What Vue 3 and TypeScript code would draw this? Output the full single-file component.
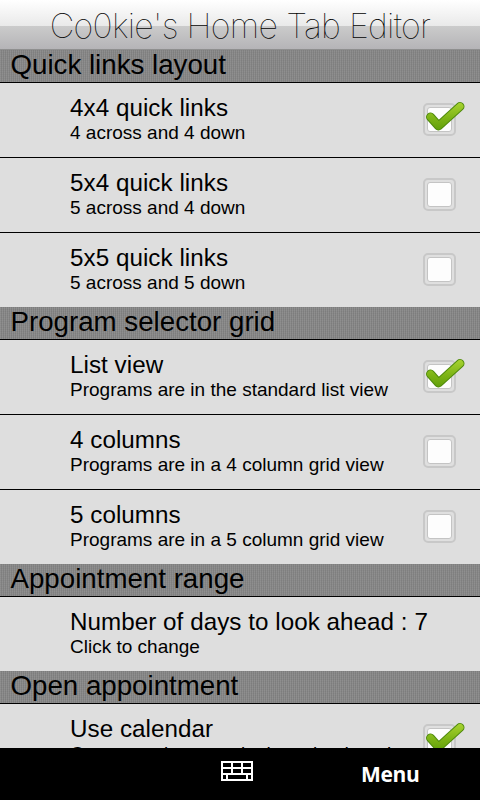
<script setup lang="ts">
interface Row {
  title: string;
  sub: string;
  check?: boolean;
  noBox?: boolean;
}

interface Section {
  name: string;
  rows: Row[];
}

const sections: Section[] = [
  {
    name: "Quick links layout",
    rows: [
      { title: "4x4 quick links", sub: "4 across and 4 down", check: true },
      { title: "5x4 quick links", sub: "5 across and 4 down" },
      { title: "5x5 quick links", sub: "5 across and 5 down" }
    ]
  },
  {
    name: "Program selector grid",
    rows: [
      { title: "List view", sub: "Programs are in the standard list view", check: true },
      { title: "4 columns", sub: "Programs are in a 4 column grid view" },
      { title: "5 columns", sub: "Programs are in a 5 column grid view" }
    ]
  },
  {
    name: "Appointment range",
    rows: [{ title: "Number of days to look ahead : 7", sub: "Click to change", noBox: true }]
  },
  {
    name: "Open appointment",
    rows: [{ title: "Use calendar", sub: "Open appointments in the calendar tab", check: true }]
  }
];
</script>

<template>
  <div class="screen">
    <header class="top">
      <h1 class="heading">Co0kie's Home Tab Editor</h1>
    </header>

    <main class="list">
      <section v-for="section in sections" :key="section.name">
        <h2 class="section-name">{{ section.name }}</h2>
        <div v-for="row in section.rows" :key="row.title" class="row">
          <div class="row-text">
            <div class="row-title">{{ row.title }}</div>
            <div class="row-sub">{{ row.sub }}</div>
          </div>
          <div v-if="!row.noBox" class="box">
            <div class="box-inner"></div>
            <svg v-if="row.check" class="tick" viewBox="0 0 40 32" aria-hidden="true">
              <defs>
                <linearGradient id="tickFill" gradientUnits="userSpaceOnUse" x1="0" y1="2" x2="0" y2="30">
                  <stop offset="0" stop-color="#a4d02e" />
                  <stop offset="0.5" stop-color="#7db416" />
                  <stop offset="1" stop-color="#5d9c08" />
                </linearGradient>
              </defs>
              <path
                d="M5.5 15 L13.5 24 L35 4.5"
                fill="none"
                stroke="#4f8a0c"
                stroke-width="9"
                stroke-linecap="round"
                stroke-linejoin="round"
              />
              <path
                d="M5.5 15 L13.5 24 L35 4.5"
                fill="none"
                stroke="url(#tickFill)"
                stroke-width="7"
                stroke-linecap="round"
                stroke-linejoin="round"
              />
            </svg>
          </div>
        </div>
      </section>
    </main>

    <footer class="bottom">
      <svg class="keys" viewBox="0 0 32 20" aria-hidden="true">
        <path
          d="M1 1h30v18H1z M1 7h30 M1 13h30 M11 1v12 M21 1v12 M6 13v6 M26 13v6"
          fill="none"
          stroke="#fff"
          stroke-width="2"
        />
      </svg>
      <span class="menu">Menu</span>
    </footer>
  </div>
</template>

<style>
html,
body {
  margin: 0;
  background: #000;
}
</style>

<style scoped>
.screen {
  width: 480px;
  height: 800px;
  display: flex;
  flex-direction: column;
  overflow: hidden;
  font-family: "Liberation Sans", Arial, sans-serif;
  color: #000;
  background: #dedede;
}

.top {
  height: 50px;
  flex: none;
  display: flex;
  justify-content: center;
  background: linear-gradient(#ffffff 0, #e9e9e9 26px, #cbcbcb 26px, #b5b4b7 49px, #8f8f8f 49px);
}

.heading {
  margin: 6px 0 0 0;
  font-family: Inter, "Liberation Sans", sans-serif;
  font-weight: 100;
  font-size: 34px;
  letter-spacing: -0.72px;
  line-height: 40px;
  white-space: nowrap;
  color: #000;
}

.list {
  flex: 1;
  min-height: 0;
  overflow: hidden;
}

.section-name {
  margin: 0;
  height: 33px;
  box-sizing: border-box;
  padding-left: 10.5px;
  font-weight: 400;
  font-size: 27.7px;
  line-height: 30px;
  border-bottom: 1px solid #000;
  background-color: #878787;
  background-image:
    repeating-linear-gradient(90deg, rgba(255, 255, 255, 0.05) 0 1px, rgba(0, 0, 0, 0.05) 1px 2px),
    repeating-linear-gradient(0deg, rgba(255, 255, 255, 0.02) 0 1px, rgba(0, 0, 0, 0.02) 1px 2px);
}

.row {
  height: 75px;
  box-sizing: border-box;
  padding: 0 24px 0 70px;
  display: flex;
  align-items: center;
  justify-content: space-between;
  background: #dedede;
  border-bottom: 1px solid #000;
}

section .row:last-child {
  height: 74px;
  border-bottom: 0;
}

.row-title {
  font-size: 24.2px;
  letter-spacing: 0.05px;
  line-height: 26px;
}

.row-sub {
  font-size: 19px;
  line-height: 24px;
}

.box {
  position: relative;
  flex: none;
  width: 33px;
  height: 33px;
  margin-top: -1px;
  box-sizing: border-box;
  padding: 2px;
  border: 2px solid #c8c8c8;
  border-radius: 5px;
  background: #dfdfdf;
}

.box-inner {
  height: 100%;
  box-sizing: border-box;
  border: 1px solid #c4c4c4;
  border-radius: 3px;
  background: #fdfdfd;
}

.tick {
  position: absolute;
  left: 0;
  top: -3px;
  width: 40px;
  height: 32px;
}

.bottom {
  height: 52px;
  flex: none;
  position: relative;
  z-index: 1;
  display: flex;
  align-items: center;
  background: #000;
  color: #fff;
}

.keys {
  width: 32px;
  height: 20px;
  margin: -6px 0 0 221px;
}

.menu {
  margin-left: 108px;
  font-family: "Open Sans", "DejaVu Sans", sans-serif;
  font-size: 21px;
  font-weight: 700;
  letter-spacing: -0.3px;
}
</style>
